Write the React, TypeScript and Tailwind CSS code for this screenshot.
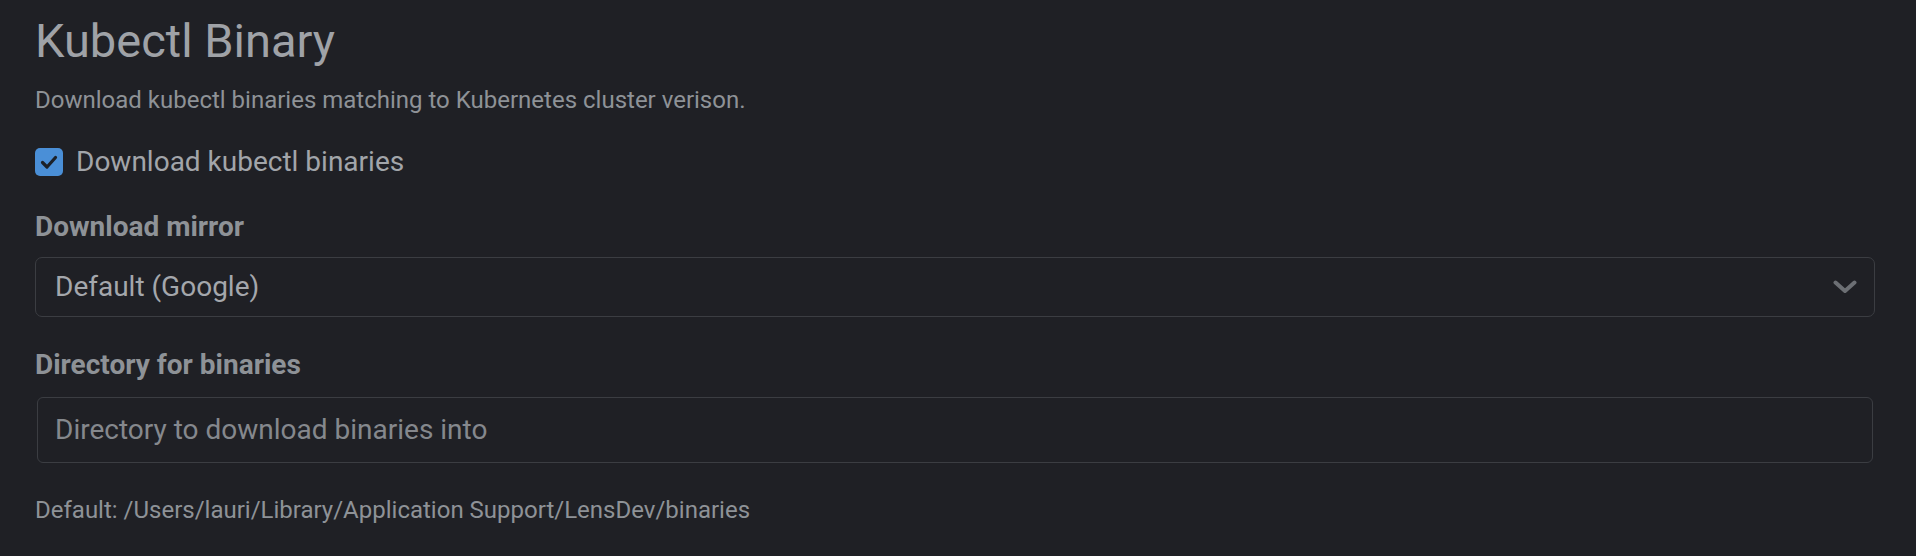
import type { JSX } from "react"

const KubectlBinary = (): JSX.Element => {
    return (
        <section className="pl-[35px] pr-[41px] pt-[13px]">
            <h1 className="text-[47px] leading-[56px] font-normal text-[#9fa2a7]">Kubectl Binary</h1>
            <p className="mt-[17px] text-[24px] leading-[28px] text-[#8e9297]">Download kubectl binaries matching to Kubernetes cluster verison.</p>

            {/* checkbox */}
            <label className="mt-[34px] h-[28px] flex items-center gap-[13px] w-fit cursor-pointer">
                <span className="w-[28px] h-[28px] rounded-[5px] bg-[#4a8fd7] flex items-center justify-center">
                    <svg width="20" height="20" viewBox="0 0 20 20" fill="none">
                        <path d="M3.5 10.5 L8 15 L16.5 5.5" stroke="#1c2128" strokeWidth="3.2" strokeLinecap="round" strokeLinejoin="round" />
                    </svg>
                </span>
                <span className="text-[28px] leading-[28px] text-[#a2a5aa]">Download kubectl binaries</span>
            </label>

            <h3 className="mt-[37px] text-[28px] leading-[28px] font-bold text-[#8e9297]">Download mirror</h3>
            <div className="mt-[16px] h-[60px] border border-[#3b3d42] rounded-[7px] flex items-center justify-between pl-[19px] pr-[17px]">
                <span className="text-[28px] text-[#a4a7ac]">Default (Google)</span>
                <svg width="24" height="14" viewBox="0 0 24 14" fill="none">
                    <path d="M2.5 2.5 L12 11 L21.5 2.5" stroke="#6c6f74" strokeWidth="4" strokeLinecap="round" strokeLinejoin="round" />
                </svg>
            </div>

            <h3 className="mt-[34px] text-[28px] leading-[28px] font-bold text-[#8e9297]">Directory for binaries</h3>
            <div className="mt-[18px] mx-[2px] h-[66px] border border-[#3b3d42] rounded-[6px] flex items-center pl-[17px]">
                <input placeholder="Directory to download binaries into" className="w-full bg-transparent outline-none text-[28px] text-[#a4a7ac] placeholder:text-[#85888d]" />
            </div>

            <p className="mt-[33px] text-[24px] leading-[28px] text-[#8e9297]">Default: /Users/lauri/Library/Application Support/LensDev/binaries</p>
        </section>
    )
}

const App = (): JSX.Element => {
    return (
        <div className="min-h-screen w-full bg-[#1f2025] font-['Roboto','Liberation_Sans',sans-serif]">
            <KubectlBinary />
        </div>
    )
}

export default App
